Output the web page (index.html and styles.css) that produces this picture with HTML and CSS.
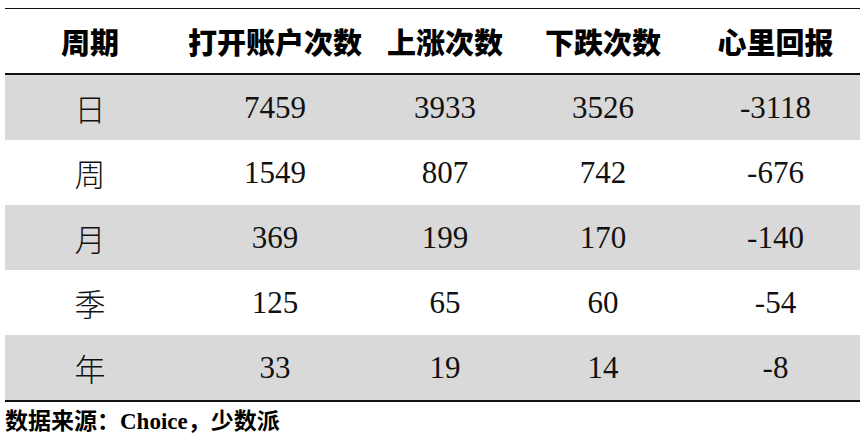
FILE: index.html
```html
<!DOCTYPE html>
<html lang="zh-CN">
<head>
<meta charset="utf-8">
<title>周期统计</title>
<link rel="stylesheet" href="styles.css">
</head>
<body>
<div class="wrap">
  <div class="table">
    <div class="row head">
      <div class="cell">周期</div>
      <div class="cell">打开账户次数</div>
      <div class="cell">上涨次数</div>
      <div class="cell">下跌次数</div>
      <div class="cell">心里回报</div>
    </div>
    <div class="row shade">
      <div class="cell">日</div><div class="cell">7459</div><div class="cell">3933</div><div class="cell">3526</div><div class="cell">-3118</div>
    </div>
    <div class="row">
      <div class="cell">周</div><div class="cell">1549</div><div class="cell">807</div><div class="cell">742</div><div class="cell">-676</div>
    </div>
    <div class="row shade">
      <div class="cell">月</div><div class="cell">369</div><div class="cell">199</div><div class="cell">170</div><div class="cell">-140</div>
    </div>
    <div class="row">
      <div class="cell">季</div><div class="cell">125</div><div class="cell">65</div><div class="cell">60</div><div class="cell">-54</div>
    </div>
    <div class="row shade">
      <div class="cell">年</div><div class="cell">33</div><div class="cell">19</div><div class="cell">14</div><div class="cell">-8</div>
    </div>
  </div>
  <div class="source">数据来源：Choice，少数派</div>
</div>
</body>
</html>
```
FILE: styles.css
```css
html, body {
  margin: 0;
  padding: 0;
  background: #ffffff;
}
.wrap {
  padding: 8px 0 0 5px;
  width: 855px;
}
.table {
  border-top: 1px solid #111;
  border-bottom: 2px solid #111;
}
.row {
  display: grid;
  grid-template-columns: 170px 200px 140px 176px 169px;
  height: 65px;
  align-items: center;
  font-family: "Liberation Serif", "Noto Sans CJK SC", serif;
  font-size: 31px;
  font-weight: 300;
  color: #111;
}
.row.head {
  height: 64px;
  border-bottom: 2px solid #111;
  font-family: "Noto Sans CJK SC", sans-serif;
  font-size: 29px;
  font-weight: 900;
  color: #000;
}
.row.shade {
  background: #d9d9d9;
}
.cell {
  text-align: center;
  white-space: nowrap;
}
.source {
  font-family: "Liberation Serif", "Noto Sans CJK SC", serif;
  font-weight: 700;
  font-size: 23px;
  line-height: 30px;
  padding-top: 5px;
  color: #000;
}
```
